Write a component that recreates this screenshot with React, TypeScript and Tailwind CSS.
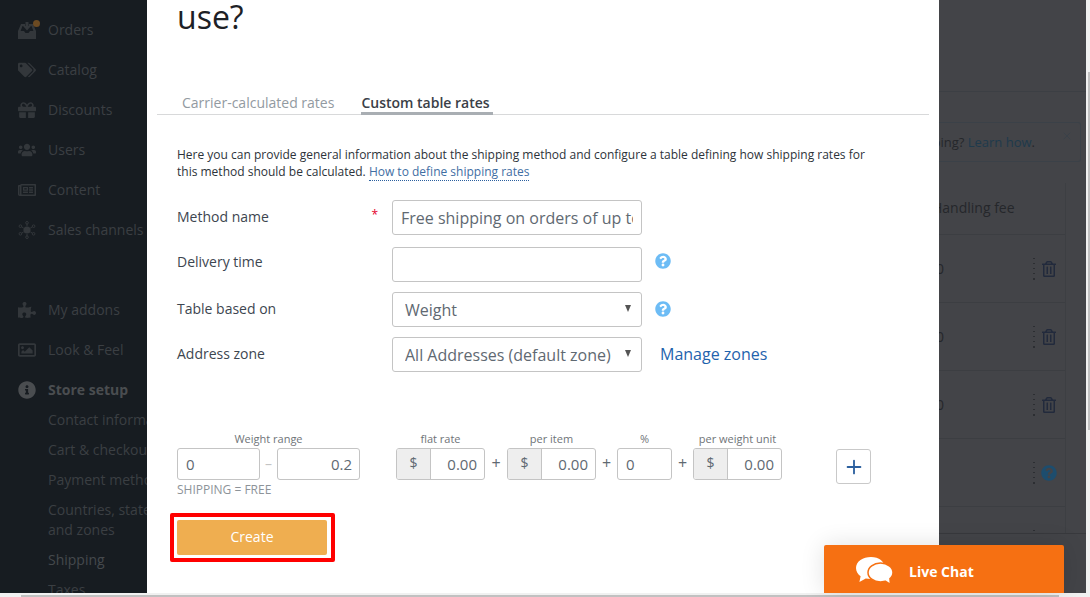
import { FaGift, FaInfoCircle, FaPuzzlePiece, FaQuestionCircle, FaRegImage, FaRegNewspaper, FaRegTrashAlt, FaTags, FaUsers } from "react-icons/fa";
import { Plus as PlusIcon, X } from "lucide-react";
import type { ReactNode } from "react";

function HubIcon() {
  return (
    <svg viewBox="0 0 18 18" width="18" height="18" fill="none" stroke="currentColor">
      <circle cx="9" cy="9" r="3.6" fill="currentColor" stroke="none" />
      <path d="M9 5V3M9 13v2M5.6 7 3.6 5.8M12.4 7l2-1.2M5.6 11l-2 1.2M12.4 11l2 1.2" strokeWidth="1" />
      <circle cx="9" cy="1.8" r="1.3" />
      <circle cx="9" cy="16.2" r="1.3" />
      <circle cx="2.4" cy="5.2" r="1.3" />
      <circle cx="15.6" cy="5.2" r="1.3" />
      <circle cx="2.4" cy="12.8" r="1.3" />
      <circle cx="15.6" cy="12.8" r="1.3" />
    </svg>
  );
}

function OrdersIcon() {
  return (
    <svg viewBox="0 0 18 17" width="18" height="17" fill="currentColor">
      <path d="M0 9 3 2h4v2H4.500L2.600 9H6l1.500 2h3L12 9h3.400L13.500 4H11V2h4l3 7v8H0Z" />
      <path d="M7.500 0h3v4H13L9 8.500 5 4h2.500Z" />
    </svg>
  );
}

function ChatIcon() {
  return (
    <svg viewBox="0 0 38 27" width="38" height="27">
      <path d="M15 0C7 0 0 4.400 0 11c0 3.600 2 6.400 4.600 8.200L3.400 25l6.400-3.600c1.400.3 3.200.5 5 .5 8 0 14-4.800 14-11S23 0 15 0Z" fill="#fff" />
      <ellipse cx="24.500" cy="15.500" rx="12.500" ry="9.500" fill="#fff" stroke="#f67012" strokeWidth="1.500" />
      <path d="m29 23 4.600 3-.6-6Z" fill="#fff" />
    </svg>
  );
}

const topItems: { label: string; icon: ReactNode }[] = [
  { label: "Orders", icon: <OrdersIcon /> },
  { label: "Catalog", icon: <FaTags size={18} /> },
  { label: "Discounts", icon: <FaGift size={18} /> },
  { label: "Users", icon: <FaUsers size={18} /> },
  { label: "Content", icon: <FaRegNewspaper size={18} /> },
  { label: "Sales channels", icon: <HubIcon /> },
];

const midItems: { label: string; icon: ReactNode }[] = [
  { label: "My addons", icon: <FaPuzzlePiece size={18} /> },
  { label: "Look & Feel", icon: <FaRegImage size={18} /> },
];

function NavRow({ label, icon }: { label: string; icon: ReactNode }) {
  return (
    <div className="relative flex h-10 items-center whitespace-nowrap">
      <span className="flex w-[30px] shrink-0 text-[#33373b]">{icon}</span>
      {label === "Orders" && <span className="absolute left-[15px] top-[10px] size-[7px] rounded-full bg-[#6b4a22]" />}
      <span>{label}</span>
    </div>
  );
}

function Sidebar() {
  return (
    <aside className="h-full w-[147px] shrink-0 overflow-hidden bg-[#171c21] pl-[18px] pt-[10px] text-sm text-[#3b3f43]">
      {topItems.map((item) => (
        <NavRow key={item.label} {...item} />
      ))}
      <div className="h-10" />
      {midItems.map((item) => (
        <NavRow key={item.label} {...item} />
      ))}
      <div className="flex h-10 items-center font-bold text-[#4a4d50]">
        <span className="flex w-[30px] shrink-0">
          <FaInfoCircle size={18} />
        </span>
        Store setup
      </div>
      <div className="-mt-[5px] pl-[30px]">
        {["Contact information", "Cart & checkout", "Payment methods"].map((s) => (
          <div key={s} className="flex h-[30px] items-center whitespace-nowrap">
            {s}
          </div>
        ))}
        <div className="whitespace-nowrap py-[5px] leading-5">
          Countries, states
          <br />
          and zones
        </div>
        <div className="flex h-[30px] items-center text-[#45494d]">Shipping</div>
        <div className="flex h-[30px] items-center">Taxes</div>
      </div>
    </aside>
  );
}

function TextInput({ value, className }: { value: string; className: string }) {
  return (
    <input
      readOnly
      value={value}
      className={`rounded-[3px] border border-[#c4c4c4] bg-white text-[#5f6972] outline-none ${className}`}
    />
  );
}

function FormSelect({ value }: { value: string }) {
  return (
    <div className="relative h-[35px] w-[250px]">
      <select
        defaultValue={value}
        className="h-full w-full appearance-none rounded-[3px] border border-[#c4c4c4] bg-white pl-3 text-base text-[#5f6972] outline-none"
      >
        <option>{value}</option>
      </select>
      <span className="absolute right-[11px] top-[13px] h-0 w-0 border-x-[3.500px] border-t-[7px] border-x-transparent border-t-[#555]" />
    </div>
  );
}

function HelpIcon() {
  return <FaQuestionCircle size={16} className="text-[#6dbcf5]" />;
}

function MoneyInput({ value }: { value: string }) {
  return (
    <div className="flex h-[32px] w-[89px] overflow-hidden rounded-[3px] border border-[#c4c4c4] text-[15px] text-[#5f6972]">
      <span className="flex w-[34px] shrink-0 items-center justify-center border-r border-[#c4c4c4] bg-[#eeeeee] pb-[2px] text-sm">$</span>
      <span className="flex flex-1 items-center justify-end pr-[7px]">{value}</span>
    </div>
  );
}

function RateColumn({ label, children, className }: { label: string; children: ReactNode; className: string }) {
  return (
    <div className={`shrink-0 ${className}`}>
      <div className="h-[18px] whitespace-nowrap text-center text-[11px] leading-[18px] text-[#6f7478]">{label}</div>
      {children}
    </div>
  );
}

function Plus({ className }: { className: string }) {
  return <span className={`mt-[18px] flex h-[29px] shrink-0 items-center justify-center text-base text-[#5f6972] ${className}`}>+</span>;
}

function FormRow({ label, children, required, className, labelClass = "pb-[1px]" }: { label: string; children: ReactNode; required?: boolean; className: string; labelClass?: string }) {
  return (
    <div className={`flex items-center ${className}`}>
      <div className={`flex w-[215px] shrink-0 items-start justify-between pr-[14px] text-sm text-[#3d4650] ${labelClass}`}>
        <span>{label}</span>
        {required && <span className="text-xs text-[#e4002b]">*</span>}
      </div>
      {children}
    </div>
  );
}

function Modal() {
  return (
    <main className="h-full w-[792px] shrink-0 overflow-hidden bg-white">
      <h1 className="-mt-[6px] pl-[30px] text-[32px] leading-[46px] text-[#1d2126]">use?</h1>
      <div className="mx-[10px] mt-[50px] flex h-[25px] gap-[27px] border-b border-[#d8d9da] pl-[25px] pt-[3px] text-sm">
        <span className="text-[#929aa1]">Carrier-calculated rates</span>
        <span className="h-[22px] border-b-[3px] border-[#a9aeb3] pr-[3px] font-semibold text-[#3a4047]">Custom table rates</span>
      </div>
      <p className="ml-[30px] mt-[31px] w-[710px] text-xs leading-[17px] text-[#2d333a]">
        Here you can provide general information about the shipping method and configure a table defining how shipping rates for this method should be calculated.{" "}
        <a className="border-b border-dotted border-[#2b5f9e] text-[#3f6ea3]">How to define shipping rates</a>
      </p>
      <div className="pl-[30px]">
        <FormRow label="Method name" required className="mt-[20px]">
          <TextInput value="Free shipping on orders of up to $20" className="h-[35px] w-[250px] px-2 text-base" />
        </FormRow>
        <FormRow label="Delivery time" className="mt-[12px]" labelClass="pb-[5px]">
          <TextInput value="" className="h-[35px] w-[250px] px-2 text-base" />
          <span className="mb-[7px] ml-[13px]">
            <HelpIcon />
          </span>
        </FormRow>
        <FormRow label="Table based on" className="mt-[10px]">
          <FormSelect value="Weight" />
          <span className="mb-[2px] ml-[13px]">
            <HelpIcon />
          </span>
        </FormRow>
        <FormRow label="Address zone" className="mt-[10px]">
          <FormSelect value="All Addresses (default zone)" />
          <a className="mb-[1px] ml-[18px] text-base text-[#1f63ad]">Manage zones</a>
        </FormRow>

        <div className="mt-[58px] flex items-start">
          <RateColumn label="Weight range" className="w-[183px]">
            <div className="flex items-center">
              <TextInput value="0" className="h-[32px] w-[83px] px-2 text-[15px]" />
              <span className="w-[17px] text-center text-sm text-[#c4c4c4]">–</span>
              <TextInput value="0.2" className="h-[32px] w-[83px] pl-2 pr-[7px] text-right text-[15px]" />
            </div>
          </RateColumn>
          <RateColumn label="flat rate" className="ml-[36px] w-[89px]">
            <MoneyInput value="0.00" />
          </RateColumn>
          <Plus className="w-[22px]" />
          <RateColumn label="per item" className="w-[89px]">
            <MoneyInput value="0.00" />
          </RateColumn>
          <Plus className="w-[21px]" />
          <RateColumn label="%" className="w-[55px]">
            <TextInput value="0" className="h-[32px] w-[55px] px-2 text-[15px]" />
          </RateColumn>
          <Plus className="w-[21px]" />
          <RateColumn label="per weight unit" className="w-[89px]">
            <MoneyInput value="0.00" />
          </RateColumn>
          <button className="ml-[54px] mt-[19px] flex size-[35px] shrink-0 items-center justify-center rounded-[3px] border border-[#c9c9c9] text-[#2b5f9e]">
            <PlusIcon size={22} strokeWidth={2} />
          </button>
        </div>
        <div className="-mt-[2px] text-xs leading-4 text-[#8d9399]">SHIPPING = FREE</div>
        <div className="-ml-[7px] mt-[15px] w-[165px] rounded-[2px] border-4 border-[#ff0000] p-[3px] pr-[4px]">
          <button className="h-[35px] w-full rounded-[2px] bg-[#efae50] pb-[2px] text-sm text-white">Create</button>
        </div>
      </div>
    </main>
  );
}

function DragDots() {
  return (
    <span className="flex h-[22px] w-[2px] flex-col justify-between">
      {[0, 1, 2, 3, 4].map((i) => (
        <span key={i} className="h-[1.500px] w-[1.500px] bg-[#2c2e32]" />
      ))}
    </span>
  );
}

function TableRow({ children, zero }: { children: ReactNode; zero?: boolean }) {
  return (
    <div className="flex h-[68px] shrink-0 items-center border-b border-[#3c3e42] text-sm text-[#25272b]">
      <span className="ml-[-3px] w-[97px]">{zero ? "0" : ""}</span>
      <DragDots />
      <span className="ml-[6px] flex">{children}</span>
    </div>
  );
}

function RightPane() {
  return (
    <section className="flex h-full min-w-0 flex-1 flex-col overflow-hidden bg-[#434448]">
      <div className="h-[92px] shrink-0 border-b border-[#3c3f44]" />
      <div className="relative mr-[5px] mt-[30px] flex h-[40px] shrink-0 items-center justify-end overflow-hidden rounded-r-[3px] border border-l-0 border-[#3b4148] pr-[45px] pt-[2px] text-[13px]">
        <span className="whitespace-nowrap text-[#25272b]">
          ping? <span className="text-[#1e3a4c]">Learn how</span>.
        </span>
        <X size={12} className="absolute right-[7px] top-[7px] text-[#3a4149]" />
      </div>
      <div className="mr-[20px] mt-[21px] h-[350px] shrink-0 overflow-hidden border-r border-[#3d3f43]">
        <div className="flex h-[52px] items-center overflow-hidden whitespace-nowrap border-b border-[#3c3e42] pb-[2px] text-sm text-[#25272b]">
          <span className="-ml-[7px]">Handling fee</span>
        </div>
        <TableRow zero>
          <FaRegTrashAlt size={16} className="text-[#222a3c]" />
        </TableRow>
        <TableRow zero>
          <FaRegTrashAlt size={16} className="text-[#222a3c]" />
        </TableRow>
        <TableRow zero>
          <FaRegTrashAlt size={16} className="text-[#222a3c]" />
        </TableRow>
        <TableRow>
          <FaQuestionCircle size={16} className="text-[#1d4d6e]" />
        </TableRow>
        <TableRow>
          <FaQuestionCircle size={16} className="text-[#1d4d6e]" />
        </TableRow>
      </div>
      <div className="flex-1 border-t border-[#38393d]" />
    </section>
  );
}

export default function App() {
  return (
    <div className="relative h-[597px] w-[1090px] overflow-hidden bg-[#f1f1f1] font-['Open_Sans',sans-serif]">
      <div className="flex h-[593px] w-[1086px]">
        <Sidebar />
        <Modal />
        <RightPane />
      </div>
      {/* vertical page scrollbar */}
      <div className="absolute right-0 top-[72px] h-[358px] w-[2px] bg-[#c1c1c1]" />
      {/* horizontal page scrollbar */}
      <div className="absolute bottom-0 left-[21px] h-[2.500px] w-[1038px] bg-[#c1c1c1]" />
      <div className="absolute left-[824px] top-[545px] flex h-[48px] w-[240px] items-center rounded-t-[2px] bg-[#f67012] pl-[32px] pt-[2px] shadow-[0_0_24px_rgba(0,0,0,0.12)]">
        <ChatIcon />
        <span className="ml-[15px] mt-[4px] text-sm font-bold text-white">Live Chat</span>
      </div>
    </div>
  );
}
